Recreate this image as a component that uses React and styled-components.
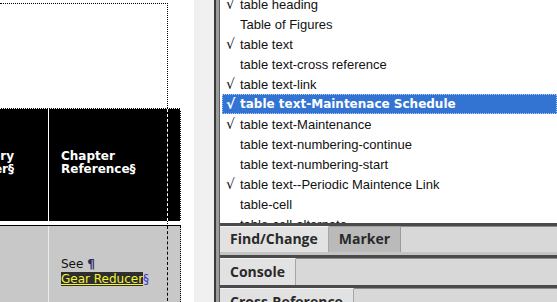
import { createGlobalStyle, styled } from "styled-components";

const GlobalStyle = createGlobalStyle`
  html, body {
    margin: 0;
    padding: 0;
    background: #f0f0f0;
  }
  body {
    width: 557px;
    height: 302px;
    overflow: hidden;
  }
`;

const styles = [
  { name: "table heading", on: true },
  { name: "Table of Figures" },
  { name: "table text", on: true },
  { name: "table text-cross reference" },
  { name: "table text-link", on: true },
  { name: "table text-Maintenace Schedule", on: true, selected: true },
  { name: "table text-Maintenance", on: true },
  { name: "table text-numbering-continue" },
  { name: "table text-numbering-start" },
  { name: "table text--Periodic Maintence Link", on: true },
  { name: "table-cell" },
  { name: "table-cell-alternate" },
];

export default function App() {
  return (
    <>
      <GlobalStyle />
      <Screen>
        <DocPane>
          <Page>
            <TextFrame>
              <Table>
                <HeadRow>
                  <ClipCell>
                    <HeadText $right>
                      Inventory
                      <br />
                      Number§
                    </HeadText>
                  </ClipCell>
                  <FrameCell>
                    <HeadText>
                      Chapter
                      <br />
                      Reference§
                    </HeadText>
                  </FrameCell>
                  <EdgeCell />
                </HeadRow>
                <BodyRow>
                  <ClipCell $body />
                  <FrameCell $body>
                    <BodyText>
                      See <Pilcrow>¶</Pilcrow>
                      <br />
                      <LinkText>Gear Reducer</LinkText>
                      <Mark>§</Mark>
                    </BodyText>
                  </FrameCell>
                  <EdgeCell $body />
                </BodyRow>
              </Table>
            </TextFrame>
          </Page>
        </DocPane>
        <Splitter />
        <Panel>
          <StyleList>
            <ListInner>
              {styles.map((s) => (
                <StyleRow key={s.name} $selected={s.selected}>
                  <Check>{s.on ? "√" : ""}</Check>
                  {s.name}
                </StyleRow>
              ))}
            </ListInner>
          </StyleList>
          <TabStrip $tall>
            <Tab $active>Find/Change</Tab>
            <Tab>Marker</Tab>
          </TabStrip>
          <TabStrip>
            <Tab $active>Console</Tab>
          </TabStrip>
          <TabStrip>
            <Tab $active>Cross-Reference</Tab>
          </TabStrip>
        </Panel>
      </Screen>
    </>
  );
}

const Screen = styled.div`
  display: flex;
  width: 557px;
  height: 302px;
  overflow: hidden;
  background: #f0f0f0;
`;

const DocPane = styled.div`
  width: 214px;
  flex-shrink: 0;
  padding-right: 20px;
  box-sizing: border-box;
  background: #f0f0f0;
`;

const Page = styled.div`
  width: 194px;
  height: 100%;
  background: #fff;
  overflow: hidden;
  padding-top: 3px;
  box-sizing: border-box;
`;

const TextFrame = styled.div`
  width: 168px;
  height: 100%;
  box-sizing: border-box;
  border-top: 1px dotted #000;
  border-right: 1px dotted #000;
  padding-top: 104px;
`;

const Table = styled.div`
  width: 181px;
`;

const Row = styled.div`
  display: grid;
  grid-template-columns: 49px 119px 13px;
`;

const HeadRow = styled(Row)`
  height: 113px;
  background: #000;
  border-top: 1px dotted #fff;
  box-sizing: border-box;
`;

const BodyRow = styled(Row)`
  height: 80px;
  margin-top: 4px;
  border-top: 1px solid #000;
  background: #c8c8c8;
`;

const ClipCell = styled.div`
  display: flex;
  justify-content: flex-end;
  overflow: hidden;
  padding-right: 34px;
  border-right: 1px solid ${(p) => (p.$body ? "#ececec" : "#fff")};
`;

const FrameCell = styled.div`
  padding-left: 12px;
  border-right: 1px dashed ${(p) => (p.$body ? "#000" : "#fff")};
`;

const EdgeCell = styled.div`
  border-right: 1px dotted ${(p) => (p.$body ? "#000" : "#fff")};
`;

const HeadText = styled.div`
  padding-top: 41px;
  flex-shrink: 0;
  font: bold 12px/13px "DejaVu Sans", sans-serif;
  color: #fff;
  white-space: nowrap;
  text-align: ${(p) => (p.$right ? "right" : "left")};
`;

const BodyText = styled.div`
  padding-top: 31px;
  font: 12px/15px "DejaVu Sans", sans-serif;
  color: #111;
  white-space: nowrap;
`;

const Pilcrow = styled.span`
  color: #2a2a60;
  font-weight: bold;
`;

const LinkText = styled.span`
  background: #2e2e2e;
  color: #f5f532;
  text-decoration: underline;
`;

const Mark = styled.span`
  color: #3a3ad0;
`;

const Splitter = styled.div`
  width: 6px;
  flex-shrink: 0;
  box-sizing: border-box;
  border-left: 2px solid #3a3a3a;
  border-right: 1px solid #5e5e5e;
  background: #9c9c9c;
`;

const Panel = styled.div`
  flex: 1;
  display: flex;
  flex-direction: column;
  background: #d8d8d8;
  min-width: 0;
`;

const StyleList = styled.div`
  height: 223px;
  flex-shrink: 0;
  background: #fff;
  overflow: hidden;
  padding-left: 2px;
`;

const ListInner = styled.div`
  margin-top: -6px;
`;

const StyleRow = styled.div`
  display: flex;
  align-items: center;
  height: 20px;
  padding-left: 4px;
  box-sizing: border-box;
  white-space: nowrap;
  font: ${(p) =>
    p.$selected
      ? `bold 12px "DejaVu Sans", sans-serif`
      : `13px "Liberation Sans", Arial, sans-serif`};
  color: ${(p) => (p.$selected ? "#fff" : "#111")};
  background: ${(p) => (p.$selected ? "#3374d3" : "transparent")};
  outline: ${(p) => (p.$selected ? "1px dotted #b8cdf0" : "none")};
  outline-offset: -1px;
`;

const Check = styled.span`
  width: 14px;
  flex-shrink: 0;
  font-family: "DejaVu Sans", sans-serif;
  font-size: 14px;
`;

const TabStrip = styled.div`
  display: flex;
  flex-shrink: 0;
  height: ${(p) => (p.$tall ? "32px" : "30px")};
  box-sizing: border-box;
  border-top: 3px solid #4a4a4a;
  border-bottom: ${(p) => (p.$tall ? "3px solid #c4c4c4" : "0")};
  box-shadow: inset 0 1px 0 #8c8c8c;
  background: #d8d8d8;
`;

const Tab = styled.div`
  display: flex;
  align-items: center;
  padding: 0 10px 2px;
  height: 100%;
  box-sizing: border-box;
  border-right: 1px solid ${(p) => (p.$active ? "#a6a6a6" : "#9a9a9a")};
  border-top: 1px solid ${(p) => (p.$active ? "#f2f2f2" : "#a0a0a0")};
  background: ${(p) => (p.$active ? "#e2e2e2" : "#bababa")};
  font: bold 14px "Open Sans", sans-serif;
  color: #2a2a2a;
  white-space: nowrap;
`;
